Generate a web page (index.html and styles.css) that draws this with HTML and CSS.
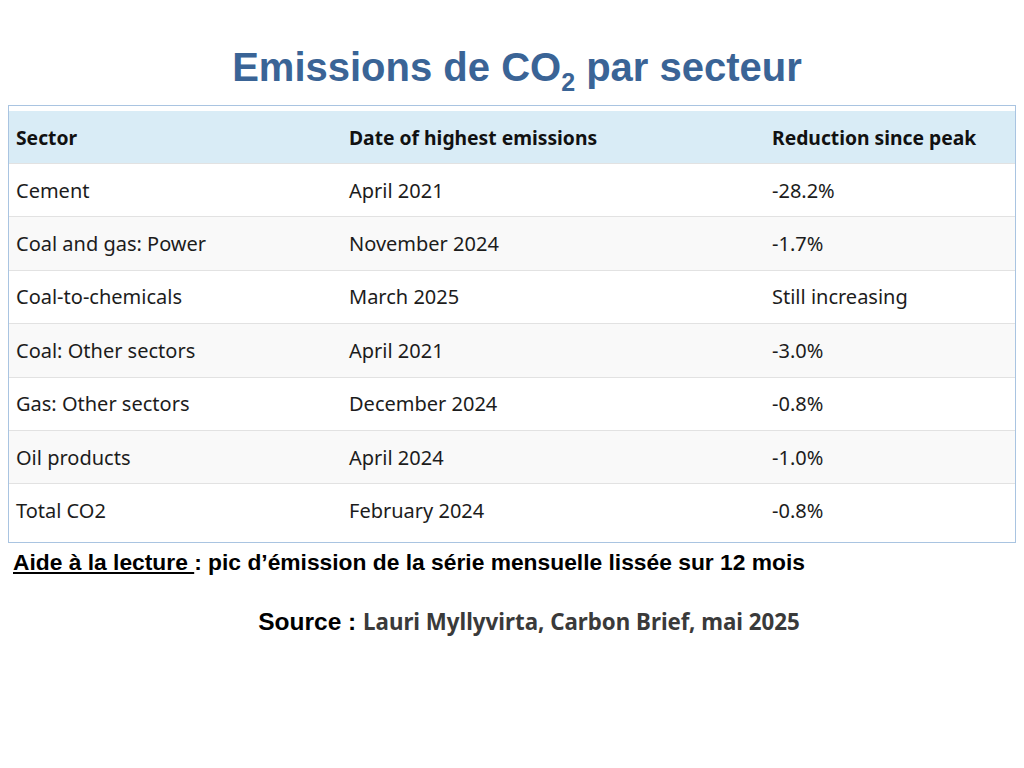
FILE: index.html
```html
<!DOCTYPE html>
<html lang="fr">
<head>
<meta charset="utf-8">
<title>Emissions de CO2 par secteur</title>
<link rel="stylesheet" href="styles.css">
</head>
<body>
<h1 class="title">Emissions de CO<sub>2</sub> par secteur</h1>
<div class="table-box">
  <table class="data">
    <thead>
      <tr><th>Sector</th><th>Date of highest emissions</th><th>Reduction since peak</th></tr>
    </thead>
    <tbody>
      <tr><td>Cement</td><td>April 2021</td><td>-28.2%</td></tr>
      <tr><td>Coal and gas: Power</td><td>November 2024</td><td>-1.7%</td></tr>
      <tr><td>Coal-to-chemicals</td><td>March 2025</td><td>Still increasing</td></tr>
      <tr><td>Coal: Other sectors</td><td>April 2021</td><td>-3.0%</td></tr>
      <tr><td>Gas: Other sectors</td><td>December 2024</td><td>-0.8%</td></tr>
      <tr><td>Oil products</td><td>April 2024</td><td>-1.0%</td></tr>
      <tr><td>Total CO2</td><td>February 2024</td><td>-0.8%</td></tr>
    </tbody>
  </table>
</div>
<p class="note"><span class="note-label">Aide à la lecture </span>: pic d’émission de la série mensuelle lissée sur 12 mois</p>
<p class="source"><span class="source-label">Source : </span><span class="source-text">Lauri Myllyvirta, Carbon Brief, mai 2025</span></p>
</body>
</html>
```
FILE: styles.css
```css
html, body {
  margin: 0;
  padding: 0;
  background: #ffffff;
}
body {
  width: 1024px;
  height: 768px;
  overflow: hidden;
}
.title {
  margin: 46px 0 0 0;
  height: 59px;
  text-align: center;
  font-family: "Liberation Sans", Arial, sans-serif;
  font-weight: bold;
  font-size: 40px;
  line-height: 43px;
  color: #3a6496;
  padding-left: 10px;
}
.title sub {
  font-size: 25px;
  line-height: 0;
  vertical-align: -10px;
}
.table-box {
  margin: 0 8px;
  border: 1px solid #a9c4e1;
  padding: 5px 0 5px 0;
}
.data {
  width: 100%;
  border-collapse: collapse;
  font-family: "Noto Sans", sans-serif;
  font-size: 20px;
  color: #1c1c1c;
}
.data th, .data td {
  text-align: left;
  padding: 0 0 0 7px;
  vertical-align: middle;
}
.data th:nth-child(1), .data td:nth-child(1) { width: 326px; }
.data th:nth-child(2), .data td:nth-child(2) { width: 416px; }
.data th {
  background: #d9ecf6;
  height: 52px;
  font-weight: bold;
  font-size: 19.3px;
  color: #111111;
}
.data td {
  height: 52.4px;
  border-top: 1px solid #e2e2e2;
}
.data tbody tr:nth-child(even) td {
  background: #f9f9f9;
}
.note {
  margin: 7px 0 0 13px;
  font-family: "Liberation Sans", Arial, sans-serif;
  font-weight: bold;
  font-size: 22.8px;
  line-height: 24px;
  color: #000000;
}
.note-label {
  text-decoration: underline;
}
.source {
  margin: 33px 0 0 0;
  text-align: center;
  padding-left: 34px;
  font-weight: bold;
  font-size: 24.5px;
  line-height: 30px;
}
.source-label {
  font-family: "Liberation Sans", Arial, sans-serif;
  color: #000000;
}
.source-text {
  font-family: "Noto Sans", sans-serif;
  font-size: 22.3px;
  color: #3a3a3a;
}
```
